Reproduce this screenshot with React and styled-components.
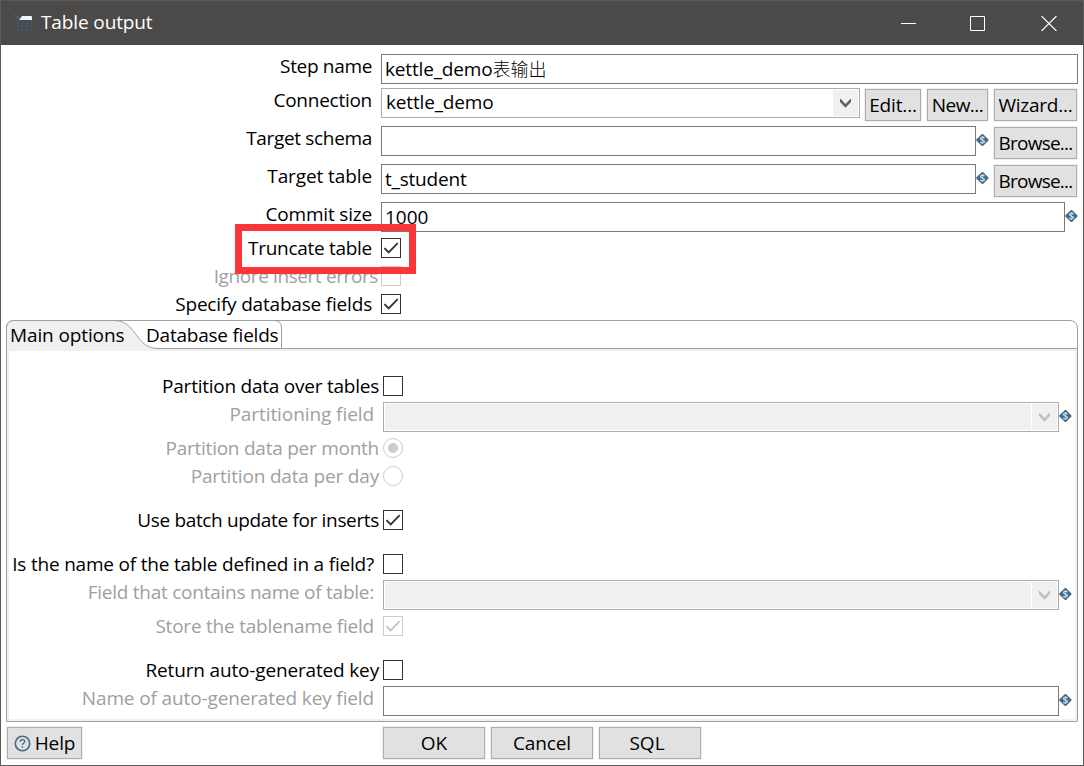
import React from 'react';
import styled, { createGlobalStyle, css } from 'styled-components';

const Global = createGlobalStyle`
  * { box-sizing: border-box; }
  body { margin: 0; background: #fff; }
`;

const Window = styled.div`
  width: 1084px;
  height: 766px;
  display: flex;
  flex-direction: column;
  border: 1px solid #5b5a58;
  background: #fff;
  color: #000;
  font: 19px/26px 'Open Sans', 'Noto Sans', 'Noto Sans CJK SC', sans-serif;
  white-space: nowrap;
  overflow: hidden;
`;

const TitleBar = styled.header`
  flex: none;
  height: 44px;
  margin-right: -1px;
  display: flex;
  align-items: center;
  padding: 0 27px 0 13px;
  background: #4c4a48;
  color: #fff;
`;

const Title = styled.h1`
  flex: 1;
  margin: -2px 0 0 8px;
  font: inherit;
  letter-spacing: -0.12px;
`;

const WindowControls = styled.div`
  display: flex;
  gap: 54px;
  svg { display: block; }
`;

const Form = styled.section`
  flex: none;
  height: 275px;
  padding-top: 9px;
`;

const Row = styled.div`
  position: relative;
  display: flex;
  align-items: flex-start;
  height: ${(p) => p.$h}px;
`;

const Label = styled.label`
  flex: none;
  width: ${(p) => p.$w}px;
  padding-right: ${(p) => p.$gap}px;
  margin-top: ${(p) => (p.$check ? -3 : -1)}px;
  text-align: right;
  letter-spacing: ${(p) => p.$ls}px;
  color: ${(p) => (p.$off ? '#a0a0a0' : '#000')};
`;

const TextField = styled.div`
  flex: none;
  width: ${(p) => p.$w}px;
  height: 30px;
  padding: 1px 3px;
  border: 1px solid #7a7a7a;
  background: #fff;
  letter-spacing: ${(p) => p.$ls || 0}px;
`;

const Hanzi = styled.span`
  font-size: 18px;
  font-family: 'Noto Sans CJK SC', sans-serif;
  font-weight: 300;
  line-height: 1;
  letter-spacing: 0;
`;

const ComboBox = styled.div`
  flex: none;
  display: flex;
  width: ${(p) => p.$w}px;
  height: 30px;
  padding: 1px;
  border: 1px solid #acacac;
  background: #fff;
`;

const ComboValue = styled.div`
  flex: 1;
  margin-top: -1px;
  padding-left: 3px;
  letter-spacing: -0.16px;
  ${(p) => p.$off && css`
    margin: 0 1px 0 0;
    background: #f0f0f0;
  `}
`;

const ComboArrow = styled.div`
  width: 25px;
  padding: 9px 0 0 7px;
  background: #f0f0f0;
  color: ${(p) => (p.$off ? '#bfbfbf' : '#606060')};
  svg { display: block; }
`;

const Button = styled.button`
  flex: none;
  display: flex;
  justify-content: center;
  width: ${(p) => p.$w}px;
  height: 32px;
  margin: ${(p) => p.$top || 0}px 0 0 ${(p) => p.$left || 0}px;
  padding: 2px ${(p) => p.$shift || 0}px 0 0;
  border: 1px solid #adadad;
  box-shadow: 0 0 0 1px #f0f0f0;
  background: #e1e1e1;
  color: #000;
  font: inherit;
  letter-spacing: ${(p) => p.$ls || 0}px;
  svg { margin: 5px 4px 0 0; }
`;

const Box = styled.span`
  flex: none;
  display: block;
  width: 20px;
  height: 20px;
  border: 1px solid ${(p) => (p.$off ? '#cccccc' : '#333333')};
  border-radius: ${(p) => (p.$round ? '50%' : 0)};
  background: #fff;
  color: ${(p) => (p.$off ? '#c4c4c4' : '#333333')};
  svg { display: block; }
`;

const RadioDot = styled.i`
  display: block;
  width: 10px;
  height: 10px;
  margin: 4px;
  border-radius: 50%;
  background: #cccccc;
`;

const VariableMark = styled.svg`
  flex: none;
  display: block;
  margin-top: 8px;
`;

const Highlight = styled.div`
  position: absolute;
  z-index: 1;
  left: 234px;
  top: -14px;
  width: 181px;
  height: 50px;
  border: 7px solid #fc3638;
`;

const TabFolder = styled.section`
  flex: none;
  width: 1072px;
  height: 402px;
  margin-left: 5px;
  display: flex;
  flex-direction: column;
  border: 1px solid #a0a0a0;
  border-radius: 8px 8px 0 0;
`;

const TabStrip = styled.nav`
  position: relative;
  flex: none;
  display: flex;
  height: 28px;
  border-bottom: 1px solid #a0a0a0;
`;

const TabShape = styled.svg`
  position: absolute;
  left: -1px;
  top: -1px;
`;

const Tab = styled.div`
  position: relative;
  width: ${(p) => p.$w}px;
  padding-left: 3px;
  margin-top: 1px;
  letter-spacing: ${(p) => p.$ls}px;
`;

const TabPanel = styled.div`
  flex: 1;
  padding-top: 25px;
  border: 2px solid #f0f0f0;
`;

const Footer = styled.footer`
  display: flex;
  padding: 5px 0 0 6px;
`;

const Chevron = () => (
  <svg width="11" height="9" viewBox="0 0 11 9" fill="currentColor">
    <path d="M0 0h.8L5.500 4.900 10.200 0H11v3L5.500 8.700 0 3z" />
  </svg>
);

const Check = () => (
  <svg width="18" height="18" viewBox="0 0 18 18" fill="none" stroke="currentColor" strokeWidth="1.8">
    <path d="M2.400 9.200l4.300 4.300 9-9.300" />
  </svg>
);

const Variable = () => (
  <VariableMark width="13" height="12" viewBox="0 0 13 12">
    <path d="M6 0h1l5.500 5.500v1L7 12H6L.2 6.500v-1z" fill="#446a88" />
    <path
      d="M8.300 4.200C7.800 2.900 4.500 2.900 4.500 4.600S8.500 6 8.500 7.600 4.800 9.200 4.300 7.900"
      fill="none"
      stroke="#d3dfe8"
      strokeWidth="1.300"
    />
    <path d="M6.400 2v8" stroke="#d3dfe8" strokeWidth=".7" />
  </VariableMark>
);

const Combo = ({ w, value, off }) => (
  <ComboBox $w={w}>
    <ComboValue $off={off}>{value}</ComboValue>
    <ComboArrow $off={off}><Chevron /></ComboArrow>
  </ComboBox>
);

const Field = ({ label, ls, h, off, children }) => (
  <Row $h={h}>
    <Label $w={380} $gap={9} $ls={ls} $off={off}>{label}</Label>
    {children}
  </Row>
);

const Option = ({ label, ls, h, off, gap = 9, w = 380, checked, children }) => (
  <Row $h={h}>
    <Label $check $w={w} $gap={gap} $ls={ls} $off={off}>{label}</Label>
    <Box $off={off}>{checked && <Check />}</Box>
    {children}
  </Row>
);

const PanelField = ({ label, ls, h, children }) => (
  <Row $h={h}>
    <Label $w={374} $gap={9} $ls={ls} $off>{label}</Label>
    {children}
    <Variable />
  </Row>
);

const Radio = ({ label, ls, h, checked }) => (
  <Row $h={h}>
    <Label $check $w={374} $gap={4} $ls={ls} $off>{label}</Label>
    <Box $round $off>{checked && <RadioDot />}</Box>
  </Row>
);

export default function App() {
  return (
    <Window>
      <Global />
      <TitleBar>
        <svg width="19" height="20" viewBox="0 0 19 20">
          <path d="M.5 1l4 4M5 1.500V5H1.500" fill="none" stroke="#3c5f7c" strokeWidth="1.300" />
          <path d="M3.500 6.500v9q0 2 2 2h10q2 0 2-2v-9M3.500 12.500h14M8.500 7v10.500M13.500 7v10.500" fill="none" stroke="#3f5a70" />
          <path d="M8 3h9q1 0 1 1v3H5z" fill="#eef6fa" />
        </svg>
        <Title>Table output</Title>
        <WindowControls>
          <svg width="15" height="15"><path d="M0 7.500h15" stroke="#fff" /></svg>
          <svg width="15" height="15"><path d="M.5.5h14v14H.5z" stroke="#fff" fill="none" /></svg>
          <svg width="18" height="15"><path d="M2.500 0l15 15M17.500 0l-15 15" stroke="#fff" strokeWidth="1.100" /></svg>
        </WindowControls>
      </TitleBar>

      <Form>
        <Field label="Step name" ls={-0.33} h={34}>
          <TextField $w={697} $ls={-0.16}>kettle_demo<Hanzi>表输出</Hanzi></TextField>
        </Field>
        <Field label="Connection" ls={-0.26} h={38}>
          <Combo w={479} value="kettle_demo" />
          <Button $w={56} $left={5} $top={1} $ls={-0.15}>Edit...</Button>
          <Button $w={61} $left={6} $top={1} $ls={-0.5}>New...</Button>
          <Button $w={83} $left={6} $top={1} $ls={-0.23}>Wizard...</Button>
        </Field>
        <Field label="Target schema" ls={-0.33} h={38}>
          <TextField $w={595} />
          <Variable />
          <Button $w={83} $left={5} $top={1} $ls={-0.78}>Browse...</Button>
        </Field>
        <Field label="Target table" ls={-0.1} h={38}>
          <TextField $w={595} $ls={-0.2}>t_student</TextField>
          <Variable />
          <Button $w={83} $left={5} $top={1} $ls={-0.78}>Browse...</Button>
        </Field>
        <Field label="Commit size" ls={-0.18} h={36}>
          <TextField $w={684}>1000</TextField>
          <Variable />
        </Field>
        <Option label="Truncate table" ls={-0.29} h={28} checked>
          <Highlight />
        </Option>
        <Option label="Ignore insert errors" ls={-0.39} h={28} gap={3} off />
        <Option label="Specify database fields" ls={-0.19} h={26} checked />
      </Form>

      <TabFolder>
        <TabStrip>
          <TabShape width="290" height="31">
            <path d="M1 31V8Q1 1 8 1H108C131 1 129 28.500 152 28.500V31z" fill="#f0f0f0" />
            <path
              d="M.5 31V8Q.5 .5 8 .5H108C131 .5 129 28.500 152 28.500"
              fill="none"
              stroke="#a0a0a0"
            />
            <path d="M268 .5Q275.500 .5 275.500 8V28.500" fill="none" stroke="#a0a0a0" />
          </TabShape>
          <Tab $w={136} $ls={-0.12}>Main options</Tab>
          <Tab $w={136} $ls={-0.23}>Database fields</Tab>
        </TabStrip>
        <TabPanel>
          <Option label="Partition data over tables" ls={-0.24} h={26} w={374} gap={4} />
          <PanelField label="Partitioning field" ls={-0.08} h={36}>
            <Combo w={676} off />
          </PanelField>
          <Radio label="Partition data per month" ls={-0.25} h={28} checked />
          <Radio label="Partition data per day" ls={-0.17} h={44} />
          <Option label="Use batch update for inserts" ls={-0.34} h={44} w={374} gap={4} checked />
          <Option label="Is the name of the table defined in a field?" ls={-0.2} h={26} w={374} />
          <PanelField label="Field that contains name of table:" ls={-0.25} h={36}>
            <Combo w={676} off />
          </PanelField>
          <Option label="Store the tablename field" ls={-0.22} h={44} w={374} off checked />
          <Option label="Return auto-generated key" ls={-0.16} h={26} w={374} gap={4} />
          <PanelField label="Name of auto-generated key field" ls={-0.13} h={30}>
            <TextField $w={676} />
          </PanelField>
        </TabPanel>
      </TabFolder>

      <Footer>
        <Button $w={75} $ls={-0.15}>
          <svg width="17" height="17" viewBox="0 0 17 17" fill="none" stroke="#446a88">
            <circle cx="8.500" cy="8.500" r="7.200" strokeWidth="1.600" />
            <path d="M6.200 6.800Q6.300 4.600 8.500 4.600T10.700 6.500C10.700 8 8.500 8 8.500 10M8.500 11.200V12.700" strokeWidth="1.400" />
          </svg>
          Help
        </Button>
        <Button $w={102} $left={301}>OK</Button>
        <Button $w={102} $left={6} $ls={-0.1}>Cancel</Button>
        <Button $w={102} $left={6} $shift={6}>SQL</Button>
      </Footer>
    </Window>
  );
}
